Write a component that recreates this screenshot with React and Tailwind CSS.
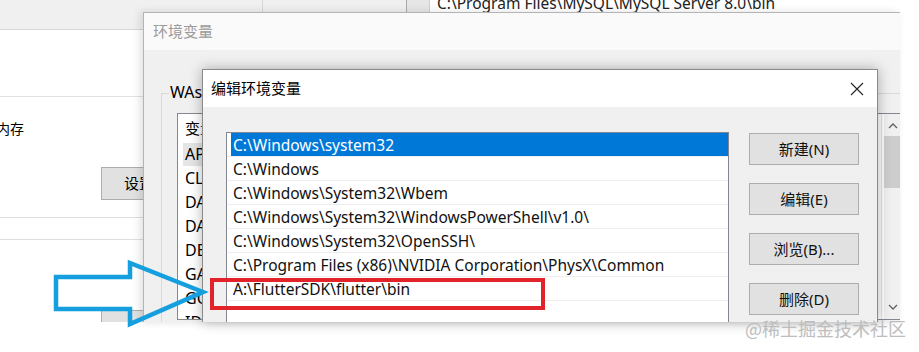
const rows = [
  "C:\\Windows\\system32",
  "C:\\Windows",
  "C:\\Windows\\System32\\Wbem",
  "C:\\Windows\\System32\\WindowsPowerShell\\v1.0\\",
  "C:\\Windows\\System32\\OpenSSH\\",
  "C:\\Program Files (x86)\\NVIDIA Corporation\\PhysX\\Common",
  "A:\\FlutterSDK\\flutter\\bin",
];

const envRows = ["APPDATA", "CLASSPATH", "DATA_HOME", "DATA_PATH", "DENO_DIR", "GATEWAY", "GOPATH", "IDEA_HOME"];

function Chevron({ down }) {
  return (
    <svg width="10" height="6" viewBox="0 0 10 6" className="block">
      <path
        d={down ? "M1 1 L5 5 L9 1" : "M1 5 L5 1 L9 5"}
        fill="none"
        stroke="#606060"
        strokeWidth="1.3"
      />
    </svg>
  );
}

function Button({ children }) {
  return (
    <div className="w-[110px] h-[32px] bg-[#e1e1e1] border border-[#adadad] flex items-center justify-center text-[15px] text-[#111]">
      {children}
    </div>
  );
}

export default function App() {
  return (
    <div className="relative w-[919px] h-[352px] overflow-hidden bg-white font-['Noto_Sans','Noto_Sans_CJK_SC',sans-serif] text-black">
      {/* background: system properties window (left) */}
      <div className="absolute left-0 top-0 w-[263px] h-[322px] bg-white flex flex-col overflow-hidden">
        <div className="h-[30px] shrink-0 bg-[#f0f0f0] border-b border-r border-[#d6d6d6]" />
        <div className="h-[67px] shrink-0 border-b border-[#e2e2e2]" />
        <div className="mt-[23px] -ml-[4px] text-[14px] leading-[16px] font-['Noto_Sans_CJK_SC',sans-serif]">内存</div>
        <div className="mt-[31px] ml-[101px] w-[90px] h-[33px] shrink-0 bg-[#e1e1e1] border border-[#adadad] flex items-center pl-[22px] text-[15px] font-['Noto_Sans_CJK_SC',sans-serif]">设置...</div>
        <div className="mt-[17px] h-[1px] shrink-0 bg-[#dedede]" />
        <div className="mt-[21px] h-[1px] shrink-0 bg-[#dedede]" />
        <div className="mt-[70px] ml-[101px] w-[90px] h-[33px] shrink-0 bg-[#e1e1e1] border border-[#adadad]" />
      </div>

      {/* background: path list window (top right) */}
      <div className="absolute left-[263px] top-0 w-[656px] h-[12px] flex">
        <div className="w-[144px] bg-[#efefef] border-r border-[#a9a9a9]" />
        <div className="w-[23px] bg-[#e6e6e6] border-r border-[#d0d0d0]" />
        <div className="flex-1 bg-white relative overflow-hidden">
          <div className="absolute left-[7px] -top-[8px] h-[24px] flex items-center text-[15.5px] text-[#222] whitespace-nowrap">
            C:\Program Files\MySQL\MySQL Server 8.0\bin
          </div>
        </div>
      </div>

      {/* environment variables window */}
      <div className="absolute left-[143px] top-[12px] w-[757px] h-[310px] border-l border-t border-[#b4b4b4] bg-[#f0f0f0] flex flex-col overflow-hidden shadow-[-3px_0_8px_rgba(0,0,0,0.12)]">
        <div className="h-[37px] shrink-0 bg-[#fafafa] flex items-center pl-[9px] text-[15px] text-[#9a9a9a] font-['Noto_Sans_CJK_SC',sans-serif]">
          环境变量
        </div>
        <div className="flex-1 flex flex-col">
          <div className="relative ml-[17px] mt-[43px] flex-1 border-l border-t border-[#d9d9d9] flex flex-col">
            <div className="absolute left-[7px] -top-[13px] px-[1px] bg-[#f0f0f0] text-[16px] leading-[22px] whitespace-nowrap">
              WAs 的用户变量(U)
            </div>
            <div className="ml-[15px] mt-[19px] w-[725px] h-[207px] shrink-0 bg-white border border-[#828790] flex">
              <div className="flex-1 flex flex-col overflow-hidden">
                <div className="h-[28px] shrink-0 flex items-center pl-[7px] text-[15px] font-['Noto_Sans_CJK_SC',sans-serif]">变量</div>
                {envRows.map((r, i) => (
                  <div key={r + i} className="h-[24px] shrink-0 flex items-center">
                    <div className={`ml-[5px] h-[23px] flex items-center pl-[2px] w-[300px] text-[16px] ${i === 0 ? "bg-[#e5e5e5]" : ""}`}>{r}</div>
                  </div>
                ))}
              </div>
              <div className="w-[1px] bg-[#e3e3e3]" />
              <div className="w-[2px]" />
              <div className="w-[17px] bg-[#f0f0f0] flex flex-col">
                <div className="h-[22px] flex items-center justify-center pt-[1px]">
                  <Chevron />
                </div>
                <div className="h-[52px] bg-[#cdcdcd]" />
                <div className="flex-1" />
                <div className="h-[22px] flex items-center justify-center pb-[2px]">
                  <Chevron down />
                </div>
              </div>
            </div>
          </div>
        </div>
      </div>

      {/* edit environment variable dialog */}
      <div className="absolute left-[202px] top-[69px] w-[676px] h-[253px] border border-b-0 border-[#8a8a8a] bg-[#f0f0f0] flex flex-col overflow-hidden shadow-[0_0_12px_rgba(0,0,0,0.3)]">
        <div className="h-[37px] shrink-0 bg-white flex items-center pl-[8px] pr-[13px]">
          <span className="flex-1 text-[15px] font-['Noto_Sans_CJK_SC',sans-serif]">编辑环境变量</span>
          <svg width="14" height="14" viewBox="0 0 14 14" className="block">
            <path d="M1 1 L13 13 M13 1 L1 13" stroke="#222" strokeWidth="1.1" fill="none" />
          </svg>
        </div>
        <div className="flex-1 flex pl-[23px] pt-[25px]">
          <div className="w-[503px] h-[220px] shrink-0 bg-white border border-[#828790] flex flex-col overflow-hidden">
            {rows.map((r, i) => (
              <div key={r} className="h-[24px] shrink-0 border-b border-[#eeeeee] flex">
                <div
                  className={`ml-[4px] flex-1 flex items-center pl-[2px] pt-[2px] text-[15.5px] whitespace-nowrap ${
                    i === 0 ? "bg-[#0078d7] text-white" : "text-[#111]"
                  }`}
                >
                  {r}
                </div>
              </div>
            ))}
          </div>
          <div className="ml-[20px] mt-[1px] flex flex-col gap-[18px]">
            <Button>新建(N)</Button>
            <Button>编辑(E)</Button>
            <Button>浏览(B)...</Button>
            <Button>删除(D)</Button>
          </div>
        </div>
      </div>

      {/* red highlight */}
      <div className="absolute left-[210px] top-[278px] w-[335px] h-[32px] border-4 border-[#e2232a]" />

      {/* blue arrow */}
      <svg className="absolute left-[50px] top-[256px]" width="162" height="76" viewBox="0 0 162 76">
        <path
          d="M6 21 L80 21 L80 7 L153 36 L80 68 L80 53 L6 53 Z"
          fill="none"
          stroke="#159fdf"
          strokeWidth="4.5"
          strokeLinejoin="miter"
        />
      </svg>

      {/* watermark */}
      <div className="absolute left-[745px] top-[316px] text-[18px] leading-[24px] text-[#bdbdbd] font-['Noto_Sans_CJK_SC',sans-serif] whitespace-nowrap">
        @稀土掘金技术社区
      </div>
    </div>
  );
}
